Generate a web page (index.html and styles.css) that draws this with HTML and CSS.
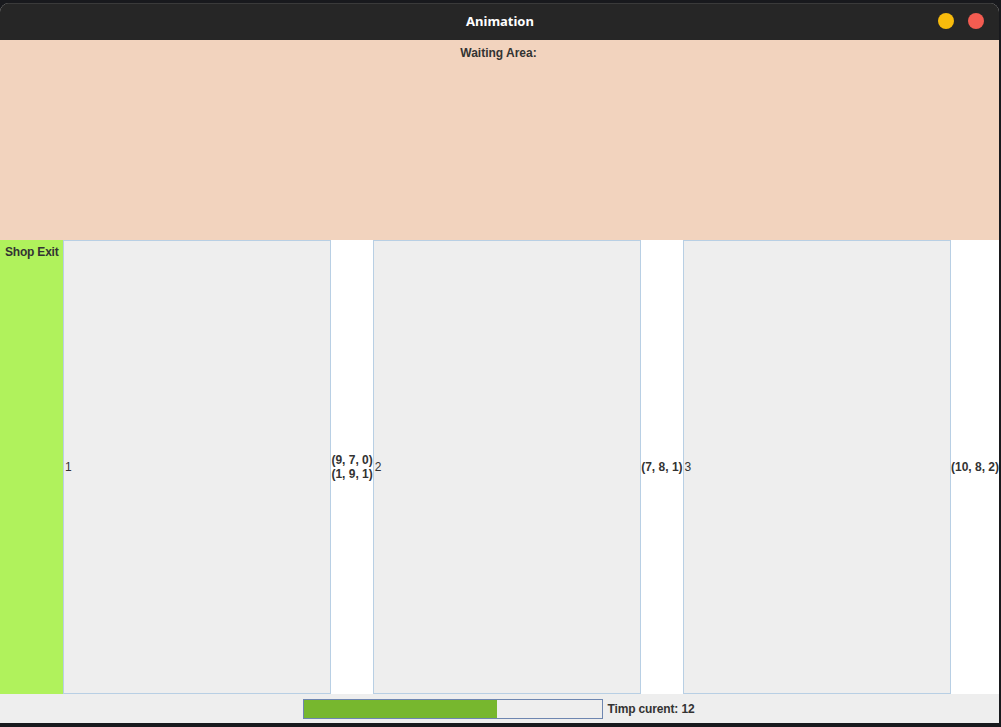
FILE: index.html
```html
<!DOCTYPE html>
<html>
<head>
<meta charset="utf-8">
<link rel="stylesheet" href="styles.css">
</head>
<body>
<div class="desktop">
  <div class="window">
    <div class="titlebar">
      <span class="title">Animation</span>
      <div class="controls">
        <span class="dot dot-min"></span>
        <span class="dot dot-close"></span>
      </div>
    </div>
    <div class="waiting">Waiting Area:</div>
    <div class="shop">
      <div class="exit">Shop Exit</div>
      <div class="chair"><span class="num">1</span></div>
      <div class="gap"><span>(9, 7, 0)</span><span>(1, 9, 1)</span></div>
      <div class="chair"><span class="num">2</span></div>
      <div class="gap"><span>(7, 8, 1)</span></div>
      <div class="chair"><span class="num">3</span></div>
      <div class="gap"><span>(10, 8, 2)</span></div>
    </div>
    <div class="status">
      <div class="progress"><div class="fill" style="width:65%"></div></div>
      <span class="time">Timp curent: 12</span>
    </div>
  </div>
</div>
</body>
</html>
```

FILE: styles.css
```css
html, body {
  margin: 0;
  padding: 0;
  background: #18191d;
  width: 1001px;
  height: 727px;
  overflow: hidden;
}
.desktop {
  padding-top: 3px;
  height: 724px;
  display: flex;
  flex-direction: column;
}
.window {
  width: 999px;
  height: 720px;
  display: flex;
  flex-direction: column;
  border-radius: 9px 9px 0 0;
  overflow: hidden;
  background: #eeeeee;
  font-family: "Liberation Sans", Arial, sans-serif;
  color: #333333;
}
.titlebar {
  height: 37px;
  flex: none;
  background: #262626;
  border-top: 1px solid #3a3a3a;
  box-sizing: border-box;
  display: flex;
  align-items: center;
  justify-content: center;
  position: relative;
  padding-bottom: 2px;
}
.title {
  color: #ffffff;
  font-family: "Noto Sans", "Open Sans", sans-serif;
  font-weight: bold;
  font-size: 13px;
  padding-left: 1px;
}
.controls {
  position: absolute;
  right: 15px;
  top: 9px;
  display: flex;
  gap: 14px;
}
.dot {
  width: 16px;
  height: 16px;
  border-radius: 50%;
  display: block;
}
.dot-min { background: #f8bb0c; }
.dot-close { background: #f35c51; }
.waiting {
  height: 200px;
  flex: none;
  background: #f2d3be;
  text-align: center;
  font-weight: bold;
  font-size: 12px;
  padding-top: 6px;
  padding-right: 2px;
  box-sizing: border-box;
}
.shop {
  height: 454px;
  flex: none;
  display: flex;
  background: #ffffff;
}
.exit {
  width: 63px;
  flex: none;
  background: #b0f25c;
  font-weight: bold;
  font-size: 12px;
  letter-spacing: -0.2px;
  padding: 5px 0 0 5px;
  box-sizing: border-box;
}
.chair {
  flex: 1;
  background: #eeeeee;
  border: 1px solid #b8cfe4;
  display: flex;
  align-items: center;
  font-size: 12px;
  padding-left: 1px;
}
.gap {
  flex: none;
  display: flex;
  flex-direction: column;
  justify-content: center;
  font-weight: bold;
  font-size: 12px;
  line-height: 14px;
  background: #ffffff;
}
.status {
  flex: 1;
  display: flex;
  align-items: center;
  justify-content: center;
  gap: 5px;
  background: #eeeeee;
  padding-right: 2px;
}
.progress {
  width: 298px;
  height: 18px;
  border: 1px solid #6e86b0;
  background: #eeeeee;
}
.fill {
  height: 100%;
  background: #77b72e;
}
.time {
  font-weight: bold;
  font-size: 12px;
  letter-spacing: -0.15px;
}
```
